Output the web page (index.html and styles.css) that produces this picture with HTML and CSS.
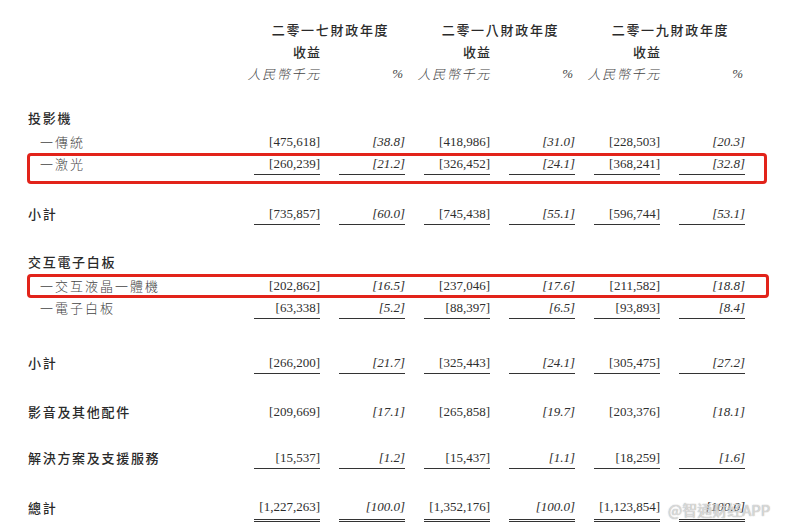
FILE: index.html
```html
<!DOCTYPE html>
<html lang="zh-Hant">
<head>
<meta charset="utf-8">
<link rel="stylesheet" href="styles.css">
</head>
<body>
<div class="sheet">
  <div class="head">
    <div class="row hrow">
      <div></div>
      <div class="year">二零一七財政年度</div>
      <div class="year">二零一八財政年度</div>
      <div class="year">二零一九財政年度</div>
    </div>
    <div class="row hrow">
      <div></div>
      <div class="rev">收益</div><div></div>
      <div class="rev">收益</div><div></div>
      <div class="rev">收益</div><div></div>
    </div>
    <div class="row hrow">
      <div></div>
      <div class="unit">人民幣千元</div><div class="pct-h">%</div>
      <div class="unit">人民幣千元</div><div class="pct-h">%</div>
      <div class="unit">人民幣千元</div><div class="pct-h">%</div>
    </div>
  </div>

  <div class="row r-proj">
    <div class="label main">投影機</div>
  </div>
  <div class="row r-trad">
    <div class="label sub">一傳統</div>
    <div class="num">[475,618]</div><div class="pct">[38.8]</div>
    <div class="num">[418,986]</div><div class="pct">[31.0]</div>
    <div class="num">[228,503]</div><div class="pct">[20.3]</div>
  </div>
  <div class="row r-laser ul boxed box1">
    <div class="label sub">一激光</div>
    <div class="num">[260,239]</div><div class="pct">[21.2]</div>
    <div class="num">[326,452]</div><div class="pct">[24.1]</div>
    <div class="num">[368,241]</div><div class="pct">[32.8]</div>
  </div>
  <div class="row r-sub1 ul">
    <div class="label main">小計</div>
    <div class="num">[735,857]</div><div class="pct">[60.0]</div>
    <div class="num">[745,438]</div><div class="pct">[55.1]</div>
    <div class="num">[596,744]</div><div class="pct">[53.1]</div>
  </div>

  <div class="row r-iwb">
    <div class="label main">交互電子白板</div>
  </div>
  <div class="row r-lcd boxed box2">
    <div class="label sub">一交互液晶一體機</div>
    <div class="num">[202,862]</div><div class="pct">[16.5]</div>
    <div class="num">[237,046]</div><div class="pct">[17.6]</div>
    <div class="num">[211,582]</div><div class="pct">[18.8]</div>
  </div>
  <div class="row r-wb ul">
    <div class="label sub">一電子白板</div>
    <div class="num">[63,338]</div><div class="pct">[5.2]</div>
    <div class="num">[88,397]</div><div class="pct">[6.5]</div>
    <div class="num">[93,893]</div><div class="pct">[8.4]</div>
  </div>
  <div class="row r-sub2 ul">
    <div class="label main">小計</div>
    <div class="num">[266,200]</div><div class="pct">[21.7]</div>
    <div class="num">[325,443]</div><div class="pct">[24.1]</div>
    <div class="num">[305,475]</div><div class="pct">[27.2]</div>
  </div>

  <div class="row r-av">
    <div class="label main">影音及其他配件</div>
    <div class="num">[209,669]</div><div class="pct">[17.1]</div>
    <div class="num">[265,858]</div><div class="pct">[19.7]</div>
    <div class="num">[203,376]</div><div class="pct">[18.1]</div>
  </div>
  <div class="row r-sol ul">
    <div class="label main">解決方案及支援服務</div>
    <div class="num">[15,537]</div><div class="pct">[1.2]</div>
    <div class="num">[15,437]</div><div class="pct">[1.1]</div>
    <div class="num">[18,259]</div><div class="pct">[1.6]</div>
  </div>
  <div class="row r-total dul">
    <div class="label main">總計</div>
    <div class="num">[1,227,263]</div><div class="pct">[100.0]</div>
    <div class="num">[1,352,176]</div><div class="pct">[100.0]</div>
    <div class="num">[1,123,854]</div><div class="pct">[100.0]</div>
  </div>

  <div class="watermark">@智通财经APP</div>
</div>
</body>
</html>
```

FILE: styles.css
```css
html, body {
  margin: 0;
  padding: 0;
  background: #ffffff;
}

.sheet {
  position: relative;
  width: 787px;
  height: 531px;
  box-sizing: border-box;
  padding: 19px 20px 0 28px;
  color: #333333;
  overflow: hidden;
}

.row {
  position: relative;
  display: grid;
  grid-template-columns: 207px repeat(6, 66px);
  column-gap: 19px;
  height: 22px;
}

.row > div {
  box-sizing: border-box;
  height: 22px;
  line-height: 22px;
  white-space: nowrap;
}

.year {
  grid-column: span 2;
  text-align: center;
  font-family: "Noto Sans CJK TC", "Noto Sans CJK SC", sans-serif;
  font-size: 13px;
  font-weight: 500;
  letter-spacing: 1.7px;
  padding-left: 2px;
  color: #2a2a2a;
}

.rev {
  text-align: right;
  font-family: "Noto Sans CJK TC", "Noto Sans CJK SC", sans-serif;
  font-size: 13px;
  font-weight: 500;
  letter-spacing: 1px;
  margin-right: -1px;
  color: #2a2a2a;
}

.unit {
  direction: rtl;
  text-align: right;
  overflow: visible;
  font-family: "Noto Sans CJK TC", "Noto Sans CJK SC", sans-serif;
  font-size: 13px;
  font-style: italic;
  font-weight: 300;
  letter-spacing: 1.7px;
  margin-right: -1px;
  color: #444444;
}

.pct-h {
  text-align: right;
  font-family: "Liberation Serif", serif;
  font-size: 13px;
  font-style: italic;
  color: #444444;
  padding-right: 2px;
}

.label {
  font-family: "Noto Sans CJK TC", "Noto Sans CJK SC", sans-serif;
  font-size: 13px;
}

.label.main {
  font-weight: 500;
  letter-spacing: 1.7px;
  color: #2a2a2a;
}

.label.sub {
  font-weight: 300;
  letter-spacing: 2px;
  padding-left: 12px;
  color: #444444;
}

.num,
.pct {
  text-align: right;
  font-family: "Liberation Serif", "Times New Roman", serif;
  font-size: 13px;
  color: #2e2e2e;
}

.pct {
  font-style: italic;
}

.ul .num,
.ul .pct {
  border-bottom: 1px solid #333333;
  line-height: 21px;
}

.dul .num,
.dul .pct {
  border-bottom: 3px double #333333;
  line-height: 20px;
  height: 25px;
}

.head { margin-bottom: 22px; }
.r-trad { margin-top: 2px; }
.r-sub1 { margin-top: 28px; }
.r-iwb { margin-top: 26px; }
.r-lcd { margin-top: 2px; }
.r-sub2 { margin-top: 33px; }
.r-av { margin-top: 27px; }
.r-sol { margin-top: 24px; }
.r-total { margin-top: 28px; }

.boxed::after {
  content: "";
  position: absolute;
  left: -1px;
  border: 3px solid #e2231a;
  border-radius: 4px;
  box-sizing: border-box;
  pointer-events: none;
}

.box1::after {
  top: 0;
  width: 740px;
  height: 31px;
}

.box2::after {
  top: -1px;
  width: 742px;
  height: 24px;
}

.watermark {
  position: absolute;
  left: 668px;
  top: 500px;
  font-family: "Noto Sans CJK SC", "Noto Sans", sans-serif;
  font-size: 15px;
  line-height: 20px;
  color: rgba(255, 255, 255, 0.55);
  text-shadow: 0 0 1px rgba(140, 140, 140, 0.6), 0 0 1px rgba(140, 140, 140, 0.6);
  letter-spacing: 0;
}
```
